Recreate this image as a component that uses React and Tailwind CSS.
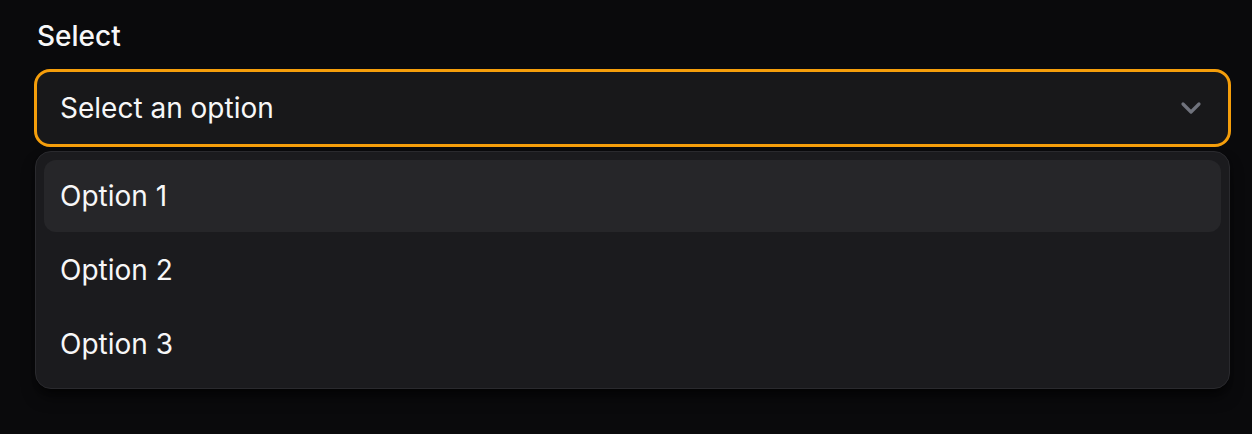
import { useState } from "react";

const options = ["Option 1", "Option 2", "Option 3"];

function Chevron() {
  return (
    <svg width="22" height="14" viewBox="0 0 22 14" fill="none">
      <path
        d="M3 3 L11 11 L19 3"
        stroke="#70737d"
        strokeWidth="3.2"
        strokeLinecap="round"
        strokeLinejoin="round"
      />
    </svg>
  );
}

export default function App() {
  const [active, setActive] = useState(0);

  return (
    <div
      className="min-h-[434px] w-full bg-[#0a0a0c] text-[#f7f7f8]"
      style={{ fontFamily: "Inter, 'Noto Sans', sans-serif" }}
    >
      <div className="ml-[34px] w-[1197px] pt-[16px]">
        <label className="block pl-[3px] text-[28px] leading-[40px] font-medium">
          Select
        </label>

        <button className="mt-[13px] flex h-[78px] w-full items-center justify-between rounded-[16px] border-[3px] border-[#f59e0b] bg-[#18181a] pl-[23px] pr-[26px] text-left text-[28px]">
          <span>Select an option</span>
          <Chevron />
        </button>

        <div className="mx-[1px] mt-[4px] flex flex-col gap-[2px] rounded-[16px] border border-[#2a2a2e] bg-[#1b1b1e] p-[8px] shadow-lg shadow-black/60">
          {options.map((opt, i) => (
            <div
              key={opt}
              onMouseEnter={() => setActive(i)}
              className={
                "flex h-[72px] items-center rounded-[12px] px-[16px] text-[28px] " +
                (active === i ? "bg-[#262629]" : "")
              }
            >
              {opt}
            </div>
          ))}
        </div>
      </div>
    </div>
  );
}
